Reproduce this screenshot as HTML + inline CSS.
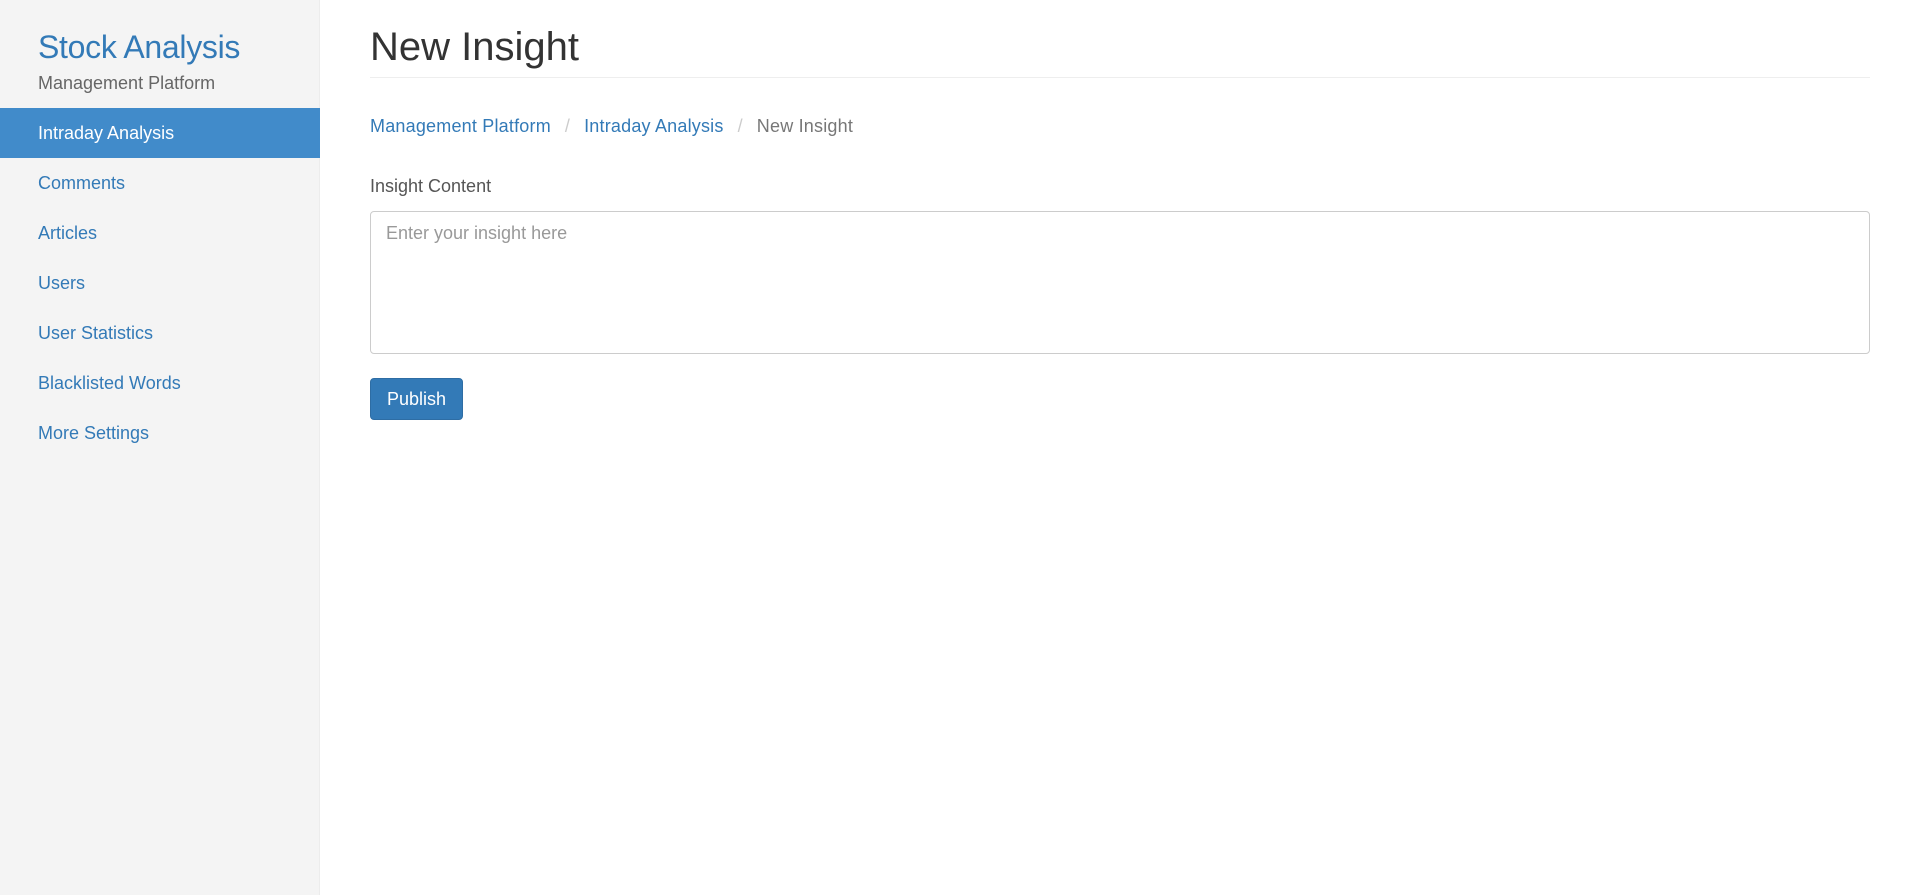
<!DOCTYPE html>
<html><head><meta charset="utf-8"><style>
*{box-sizing:border-box;margin:0;padding:0}
body{width:1920px;height:895px;overflow:hidden;font-family:"Liberation Sans",sans-serif;background:#fff;position:relative}
.side{position:absolute;left:0;top:0;width:320px;height:895px;background:#f4f4f4;border-right:1px solid #ececec}
.brand{position:absolute;left:38px;top:29px;font-size:32px;color:#337ab7;letter-spacing:-0.3px}
.sub{position:absolute;left:38px;top:73px;font-size:18px;color:#666}
.nav{position:absolute;left:0;top:108px;width:320px}
.nav div{height:50px;line-height:50px;padding-left:38px;font-size:18px;color:#337ab7}
.nav div.act{background:#418bca;color:#fff}
.main{position:absolute;left:370px;width:1500px}
h1{position:absolute;top:25px;left:0;font-size:40px;font-weight:normal;color:#333}
.hr{position:absolute;top:77px;left:0;width:1500px;border-top:1px solid #eee}
.bc{position:absolute;top:116px;left:0;font-size:18px;color:#337ab7;white-space:nowrap;letter-spacing:0.2px}
.bc .s{color:#ccc;padding:0 14px}
.bc .c{color:#777}
.lbl{position:absolute;top:176px;font-size:18px;color:#555}
.ta{position:absolute;top:211px;left:0;width:1500px;height:143px;border:1px solid #ccc;border-radius:4px;padding:11px 15px;font-size:18px;color:#999}
.btn{position:absolute;top:378px;left:0;width:93px;height:42px;background:#337ab7;border:1px solid #2e6da4;border-radius:4px;color:#fff;font-size:18px;line-height:40px;text-align:center}
</style></head><body>
<div class="side">
<div class="brand">Stock Analysis</div>
<div class="sub">Management Platform</div>
<div class="nav">
<div class="act">Intraday Analysis</div>
<div>Comments</div><div>Articles</div><div>Users</div><div>User Statistics</div><div>Blacklisted Words</div><div>More Settings</div>
</div></div>
<div class="main">
<h1>New Insight</h1>
<div class="hr"></div>
<div class="bc">Management Platform<span class="s">/</span>Intraday Analysis<span class="s">/</span><span class="c">New Insight</span></div>
<div class="lbl">Insight Content</div>
<div class="ta">Enter your insight here</div>
<div class="btn">Publish</div>
</div>
</body></html>
